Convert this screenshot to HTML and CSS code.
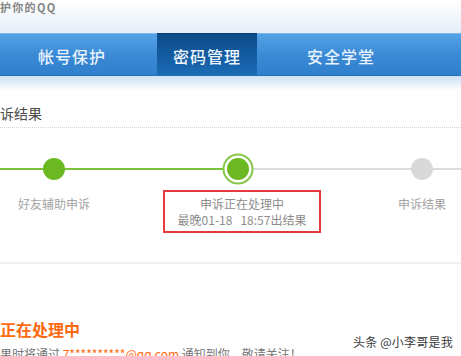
FILE: index.html
```html
<!DOCTYPE html>
<html lang="zh-CN">
<head>
<meta charset="utf-8">
<title>申诉结果</title>
<link rel="stylesheet" href="styles.css">
</head>
<body>
<div class="page">
  <header class="top"><span class="slogan">护你的QQ</span></header>
  <nav class="nav">
    <a class="tab tab-1">帐号保护</a>
    <a class="tab tab-2 active">密码管理</a>
    <a class="tab tab-3">安全学堂</a>
  </nav>
  <div class="band"></div>
  <section class="panel">
    <h2 class="title">诉结果</h2>
    <div class="steps">
      <div class="step done">
        <div class="node"><span class="dot"></span></div>
        <div class="label">好友辅助申诉</div>
      </div>
      <div class="step current">
        <div class="node"><span class="dot"></span></div>
        <div class="label boxed"><span class="line">申诉正在处理中</span><span class="line">最晚01-18&nbsp;&nbsp;&nbsp;18:57出结果</span></div>
      </div>
      <div class="step todo">
        <div class="node"><span class="dot"></span></div>
        <div class="label">申诉结果</div>
      </div>
    </div>
  </section>
  <section class="result">
    <h3 class="status">正在处理中</h3>
    <p class="note">果时将通过 <span class="mail">7**********@qq.com</span> 通知到你，敬请关注！</p>
  </section>
  <div class="watermark">头条 @小李哥是我</div>
</div>
</body>
</html>
```
FILE: styles.css
```css
* { box-sizing: border-box; }
html, body { margin: 0; padding: 0; background: #fff; }
body {
  width: 461px;
  height: 356px;
  overflow: hidden;
  font-family: "Noto Sans CJK SC", "Liberation Sans", sans-serif;
}
.page { position: relative; width: 461px; height: 356px; overflow: hidden; }

.top {
  height: 33px;
  background: linear-gradient(#ffffff, #e5eef8);
  padding-top: 1px;
}
.slogan {
  display: block;
  font-size: 11px;
  line-height: 12px;
  font-weight: 700;
  letter-spacing: 1.3px;
  color: #858585;
}

.nav {
  display: flex;
  height: 43px;
  background: linear-gradient(#55a3e6, #3a8ad6 50%, #2f7fcc);
  border-top: 1px solid #7bb8ec;
  border-bottom: 1px solid #2a6fb4;
}
.tab {
  display: flex;
  align-items: center;
  justify-content: center;
  padding-top: 3px;
  font-size: 16px;
  letter-spacing: 1px;
  font-weight: 500;
  color: #e9f3fc;
}
.tab-1 { width: 157px; padding-right: 13px; }
.tab-2 { width: 100px; }
.tab-3 { width: 168px; }
.tab.active {
  background: linear-gradient(#0c4a88, #12599d 45%, #1b6cb6);
  border-top: 1px solid #0a3d72;
  margin-top: -1px;
  color: #f0f6fc;
}

.band {
  height: 14px;
  background: linear-gradient(#cfe2f5, #e6f0fa 60%, #ffffff);
}

.panel {
  border-bottom: 2px solid #efefef;
  padding-bottom: 29px;
}
.title {
  margin: 0;
  padding-top: 13px;
  padding-bottom: 4px;
  font-size: 14px;
  line-height: 20px;
  font-weight: 400;
  color: #4a4a4a;
  border-bottom: 1px dotted #d6d6d6;
}

.steps {
  display: grid;
  grid-template-columns: 184px 184px 184px;
  margin-left: -38px;
  padding-top: 25px;
}
.step {
  display: flex;
  flex-direction: column;
  align-items: center;
}
.node {
  width: 100%;
  height: 31px;
  display: flex;
  align-items: center;
  justify-content: center;
  background-repeat: no-repeat;
  background-position: center;
  background-size: 100% 2px;
}
.done .node { background-image: linear-gradient(#7cc23a, #7cc23a); }
.current .node { background-image: linear-gradient(to right, #7cc23a 50%, #dcdcdc 50%); }
.todo .node { background-image: linear-gradient(#dcdcdc, #dcdcdc); }

.dot {
  width: 22px;
  height: 22px;
  border-radius: 50%;
  background: #6bb823;
}
.current .dot {
  box-shadow: 0 0 0 2.5px #ffffff, 0 0 0 4.5px #86c649;
}
.todo .dot { background: #d9d9d9; }

.label {
  margin-top: 6px;
  padding: 4px 0 3px;
  border: 2px solid transparent;
  font-size: 12px;
  line-height: 16px;
  color: #a3a3a3;
  text-align: center;
  white-space: nowrap;
}
.label.boxed {
  display: flex;
  flex-direction: column;
  align-items: center;
  width: 158px;
  border-color: #e63b3e;
  color: #8d8d8d;
  margin-left: 8px;
}
.line { display: block; line-height: 16px; }

.result { padding-top: 55px; }
.status {
  margin: 0;
  font-size: 16px;
  line-height: 20px;
  font-weight: 700;
  color: #ff6a0f;
}
.note {
  margin: 7px 0 0;
  font-size: 12px;
  line-height: 16px;
  color: #777;
  white-space: nowrap;
}
.mail { color: #ff6a0f; }

.watermark {
  position: absolute;
  left: 353px;
  top: 334px;
  font-size: 12px;
  line-height: 16px;
  letter-spacing: 0.2px;
  color: #3a3a3a;
  text-shadow: 0 0 2px #fff;
}
```
